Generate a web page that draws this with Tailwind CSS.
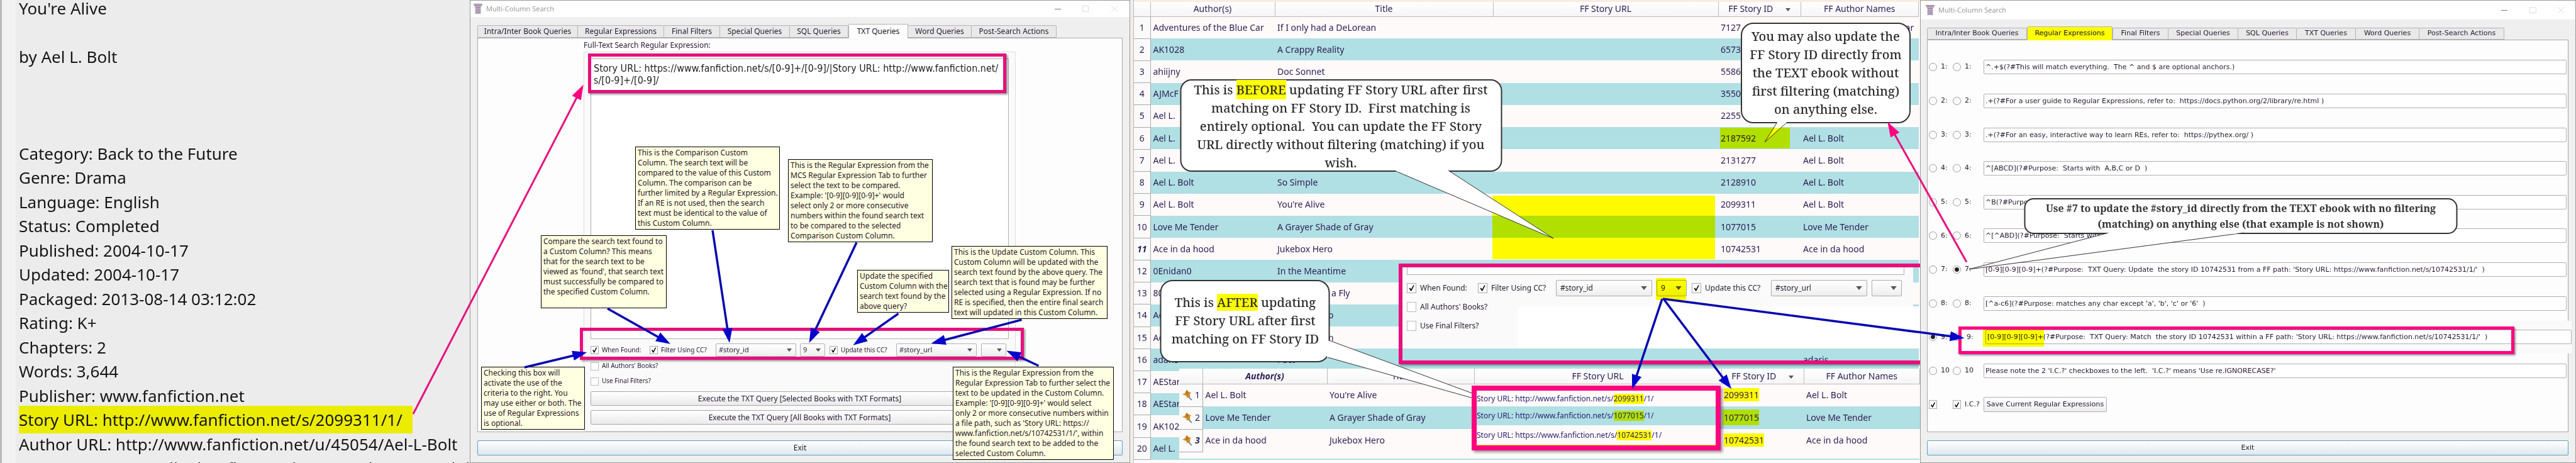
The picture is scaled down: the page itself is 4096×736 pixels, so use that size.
<!DOCTYPE html>
<html lang="en">
<head>
<meta charset="utf-8">
<title>Multi-Column Search – TXT Queries</title>
<script src="https://cdn.jsdelivr.net/npm/@tailwindcss/browser@4"></script>
</head>
<body class="bg-[#ececec] font-['Noto_Sans',sans-serif] text-xs text-[#24182f]">
<svg class="hidden">
  <symbol id="pillar" viewBox="0 0 14 16"><path d="M0 .5h14M1 3h12M2.500 5.500h9" stroke="#7c6480" stroke-width="1.400"/><path d="M2.500 6.500h9V16h-9z" fill="#b9a6c0"/><path d="M5 7v9M7.500 7v9M10 7v9" stroke="#9d88a6" stroke-width=".8"/></symbol>
  <symbol id="pin" viewBox="0 0 16 18"><path d="M9 11l6 6" stroke="#666" stroke-width="1.500"/><path d="M6.500 1l3.500 3 4 1-2 2.500.5 5-2.500-1-3 2.500-.5-4L0 8l4-2z" fill="#cf8c2b"/><path d="M6.500 1l3.500 3-3 6-1-3z" fill="#b8751f"/></symbol>
  <symbol id="down" viewBox="0 0 8 5"><path d="M0 0h8L4 5z" fill="#555"/></symbol>
  <symbol id="tick" viewBox="0 0 13 13"><path d="M3 6.500L4.500 6l1.300 2.200L8.800 2.500l1.400.2L6.300 10.500H5.200z" fill="#000"/></symbol>
</svg>
<main class="relative isolate grid h-screen min-h-[736px] grid-cols-[747fr_1050fr_1256fr_1043fr] overflow-hidden">

<!-- E-book text -->
<section class="flex overflow-hidden bg-[#ececec]">
  <div class="w-[3px] bg-[#b9b9b9]"></div>
  <div class="w-[22px] bg-[#f2f2f2]"></div>
  <div class="-mt-[6px] grid h-[770px] grid-rows-[repeat(20,1fr)] items-center pl-[5px] text-[26px] whitespace-nowrap text-[#161616]">
    <p>You're Alive</p><p></p>
    <p>by Ael L. Bolt</p><p></p><p></p><p></p>
    <p>Category: Back to the Future</p>
    <p>Genre: Drama</p>
    <p>Language: English</p>
    <p>Status: Completed</p>
    <p>Published: 2004-10-17</p>
    <p>Updated: 2004-10-17</p>
    <p>Packaged: 2013-08-14 03:12:02</p>
    <p>Rating: K+</p>
    <p>Chapters: 2</p>
    <p>Words: 3,644</p>
    <p>Publisher: www.fanfiction.net</p>
    <p><span class="bg-[#ecec00] py-1 pr-4">Story URL: http://www.fanfiction.net/s/2099311/1/</span></p>
    <p>Author URL: http://www.fanfiction.net/u/45054/Ael-L-Bolt</p>
    <p>Summary: Two small tales, flux. Back, Doc and Marty and d</p>
  </div>
</section>

<!-- TXT Queries dialog -->
<section class="flex flex-col border border-[#9a9a9a] bg-[#efefef]">
  <header class="flex h-[26px] items-center bg-white pl-[5px] text-[11px] text-[#999]">
    <svg class="mr-[6px] h-4 w-[14px]"><use href="#pillar"/></svg>
    <h1>Multi-Column Search</h1>
    <svg class="mr-[18px] ml-auto h-3 w-[102px]" fill="none"><path d="M1 6.500h10" stroke="#777"/><path d="M45.500 1.500h9v9h-9z" stroke="#ddd"/><path d="M91 1l10 10M101 1l-10 10" stroke="#ddd"/></svg>
  </header>
  <nav class="mt-[13px] flex h-5 items-stretch px-[11px] [&>button]:rounded-t-xs [&>button]:border [&>button]:border-[#b4b4b4] [&>button]:bg-[#e9e9e9] [&>button]:whitespace-nowrap">
    <button class="w-[160px]">Intra/Inter Book Queries</button>
    <button class="-ml-px w-[138px]">Regular Expressions</button>
    <button class="-ml-px w-[90px]">Final Filters</button>
    <button class="-ml-px w-[112px]">Special Queries</button>
    <button class="-ml-px w-[94px]">SQL Queries</button>
    <button class="relative z-10 -mt-[2px] -mb-px w-[95px] border-b-0! bg-[#fdfdfd]!">TXT Queries</button>
    <button class="-ml-px w-[102px]">Word Queries</button>
    <button class="-ml-px w-[136px]">Post-Search Actions</button>
  </nav>
  <div class="mx-[11px] flex flex-1 flex-col border border-[#aaa] bg-[#fdfdfd] pr-[169px] pl-[168px]">
    <label for="fts" class="h-[21px] leading-[21px]">Full-Text Search Regular Expression:</label>
    <div class="flex flex-1 flex-col rounded-xs border border-[#dedede] bg-[#fafafa] p-[10px]">
      <textarea id="fts" class="flex-1 resize-none border border-[#b0b0b0] bg-white px-[4px] py-[5px] font-['DejaVu_Sans_Condensed',sans-serif] text-base leading-[19px] whitespace-pre text-[#222]">Story URL: https://www.fanfiction.net/s/[0-9]+/[0-9]/|Story URL: http://www.fanfiction.net/
s/[0-9]+/[0-9]/</textarea>
      <div class="mt-[7px] flex h-[21px] items-center text-[10px] [&_input]:size-[13px] [&_input]:shrink-0 [&_input]:appearance-none [&_input]:border [&_input]:border-[#aaa] [&_input]:bg-white [&_label]:flex [&_label]:items-center [&_label]:gap-[5px] [&_label]:whitespace-nowrap [&_label>svg]:pointer-events-none [&_label>svg]:-ml-[18px] [&_label>svg]:size-[13px] [&_label>svg]:shrink-0 [&_select]:h-full [&_select]:w-full [&_select]:appearance-none [&_select]:rounded-xs [&_select]:border [&_select]:border-[#b0b0b0] [&_select]:bg-linear-to-b [&_select]:from-white [&_select]:to-[#eee] [&_select]:pl-1 [&_select]:text-[11px]">
        <label class="w-[94px]"><input type="checkbox" checked><svg><use href="#tick"/></svg>When Found:</label>
        <label class="w-[105px]"><input type="checkbox" checked><svg><use href="#tick"/></svg>Filter Using CC?</label>
        <div class="relative h-full w-[128px]"><select aria-label="Comparison column"><option>#story_id</option></select><svg class="absolute top-2 right-[7px] h-[5px] w-2"><use href="#down"/></svg></div>
        <div class="relative ml-[6px] h-full w-10"><select aria-label="Comparison expression"><option>9</option></select><svg class="absolute top-2 right-[7px] h-[5px] w-2"><use href="#down"/></svg></div>
        <label class="ml-[7px] w-[106px]"><input type="checkbox" checked><svg><use href="#tick"/></svg>Update this CC?</label>
        <div class="relative h-full w-[128px]"><select aria-label="Update column"><option>#story_url</option></select><svg class="absolute top-2 right-[7px] h-[5px] w-2"><use href="#down"/></svg></div>
        <div class="relative ml-[7px] h-full w-10"><select aria-label="Update expression"><option></option></select><svg class="absolute top-2 right-[7px] h-[5px] w-2"><use href="#down"/></svg></div>
      </div>
      <label class="mt-2 flex h-[14px] items-center gap-[5px] text-[10px]"><input type="checkbox" class="size-[13px] appearance-none border border-[#bbb] bg-white">All Authors' Books?</label>
      <label class="mt-[10px] flex h-[14px] items-center gap-[5px] text-[10px]"><input type="checkbox" class="size-[13px] appearance-none border border-[#bbb] bg-white">Use Final Filters?</label>
      <button class="mt-[9px] h-[23px] rounded-xs border border-[#a8a8a8] bg-linear-to-b from-white to-[#eaeaea]">Execute the TXT Query [Selected Books with TXT Formats]</button>
      <button class="mt-[7px] h-[23px] rounded-xs border border-[#a8a8a8] bg-linear-to-b from-white to-[#eaeaea]">Execute the TXT Query [All Books with TXT Formats]</button>
    </div>
  </div>
  <button class="mx-[11px] mt-[13px] mb-[11px] h-6 rounded-xs border border-[#5f9fbd] bg-linear-to-b from-white to-[#dde8ef]">Exit</button>
</section>

<!-- Library table -->
<section class="relative flex overflow-hidden bg-[#fffafa] text-sm text-[#2a1c50]">
  <div class="w-[6px] border-r border-[#b8b8b8] bg-[#f0eeec]"></div>
  <div class="flex-1 border-t-3 border-[#f8ece2] pr-[2px]">
    <table class="h-[728px] w-full table-fixed border-collapse whitespace-nowrap [&_td]:overflow-hidden [&_td]:p-0 [&_td]:pl-1 [&_td]:leading-5 [&_tbody_th]:border-r [&_tbody_th]:border-b [&_tbody_th]:border-[#aaa] [&_tbody_th]:bg-[#fbfafa] [&_tbody_th]:p-0 [&_tbody_th]:text-center [&_tbody_th]:font-normal [&_tbody_tr:nth-child(even)]:bg-[#b0dfe4] [&_thead_th]:border-r [&_thead_th]:border-b [&_thead_th]:border-[#bbb] [&_thead_th]:bg-linear-to-b [&_thead_th]:from-white [&_thead_th]:to-[#f6f4f6] [&_thead_th]:p-0 [&_thead_th]:leading-[22px] [&_thead_th]:font-normal">
      <colgroup><col class="w-[26px]"><col class="w-[198px]"><col class="w-[347px]"><col class="w-[358px]"><col class="w-[131px]"><col></colgroup>
      <thead><tr class="h-[23px]"><th></th><th>Author(s)</th><th>Title</th><th>FF Story URL</th><th>FF Story ID <svg class="ml-4 inline h-[5px] w-2"><use href="#down"/></svg></th><th>FF Author Names</th></tr></thead>
      <tbody>
        <tr><th>1</th><td>Adventures of the Blue Car</td><td>If I only had a DeLorean</td><td></td><td>7127</td><td>Adventures of the Blue Car</td></tr>
        <tr><th>2</th><td>AK1028</td><td>A Crappy Reality</td><td></td><td>6573</td><td></td></tr>
        <tr><th>3</th><td>ahiijny</td><td>Doc Sonnet</td><td></td><td>5586</td><td></td></tr>
        <tr><th>4</th><td>AJMcF</td><td></td><td></td><td>3550</td><td></td></tr>
        <tr><th>5</th><td>Ael L.</td><td></td><td></td><td>2255</td><td></td></tr>
        <tr><th>6</th><td>Ael L.</td><td></td><td></td><td>2187592</td><td>Ael L. Bolt</td></tr>
        <tr><th>7</th><td>Ael L.</td><td></td><td></td><td>2131277</td><td>Ael L. Bolt</td></tr>
        <tr><th>8</th><td>Ael L. Bolt</td><td>So Simple</td><td></td><td>2128910</td><td>Ael L. Bolt</td></tr>
        <tr><th>9</th><td>Ael L. Bolt</td><td>You're Alive</td><td></td><td>2099311</td><td>Ael L. Bolt</td></tr>
        <tr><th>10</th><td>Love Me Tender</td><td>A Grayer Shade of Gray</td><td></td><td>1077015</td><td>Love Me Tender</td></tr>
        <tr><th><b class="italic">11</b></th><td>Ace in da hood</td><td>Jukebox Hero</td><td></td><td>10742531</td><td>Ace in da hood</td></tr>
        <tr><th>12</th><td>0Enidan0</td><td>In the Meantime</td><td></td><td></td><td></td></tr>
        <tr><th>13</th><td>80</td><td><span class="pl-[86px]">a Fly</span></td><td></td><td></td><td></td></tr>
        <tr><th>14</th><td>Ac</td><td><span class="pl-[81px]">o</span></td><td></td><td></td><td></td></tr>
        <tr><th>15</th><td>Ac</td><td><span class="pl-[81px]">n</span></td><td></td><td></td><td></td></tr>
        <tr><th>16</th><td>adaris</td><td>Pact</td><td></td><td></td><td>adaris</td></tr>
        <tr><th>17</th><td>AEStar</td><td></td><td></td><td></td><td></td></tr>
        <tr><th>18</th><td>AEStar</td><td></td><td></td><td></td><td></td></tr>
        <tr><th>19</th><td>AK102</td><td></td><td></td><td></td><td></td></tr>
        <tr><th>20</th><td>Ael L.</td><td></td><td></td><td></td><td></td></tr>
      </tbody>
    </table>
  </div>

  <!-- Controls strip over the table -->
  <div class="absolute top-[425px] left-[433px] h-[129px] w-[812px] bg-[#fafafa] pl-[7px] text-[#24182f]">
    <div class="absolute top-[62px] -right-3 bottom-0 left-[184px] bg-white"></div>
    <div class="relative flex flex-col text-xs">
      <div class="mr-[14px] h-3 border border-t-0 border-[#b0b0b0] bg-white"></div>
      <div class="mt-2 flex h-[26px] items-center [&_input]:h-4 [&_input]:w-[15px] [&_input]:shrink-0 [&_input]:appearance-none [&_input]:border [&_input]:border-[#aaa] [&_input]:bg-white [&_label]:flex [&_label]:items-center [&_label]:gap-[6px] [&_label]:whitespace-nowrap [&_label>svg]:pointer-events-none [&_label>svg]:-ml-[21px] [&_label>svg]:h-4 [&_label>svg]:w-[15px] [&_label>svg]:shrink-0 [&_select]:h-full [&_select]:w-full [&_select]:appearance-none [&_select]:rounded-xs [&_select]:border [&_select]:border-[#aaa] [&_select]:bg-linear-to-b [&_select]:from-white [&_select]:to-[#eee] [&_select]:pl-[6px]">
        <label class="w-[113px]"><input type="checkbox" checked><svg><use href="#tick"/></svg>When Found:</label>
        <label class="w-[124px]"><input type="checkbox" checked><svg><use href="#tick"/></svg>Filter Using CC?</label>
        <div class="relative h-full w-[153px]"><select aria-label="Comparison column copy"><option>#story_id</option></select><svg class="absolute top-[10px] right-2 h-[6px] w-[10px]"><use href="#down"/></svg></div>
        <div class="relative ml-[7px] h-full w-12"><select aria-label="Comparison expression copy"><option>9</option></select><svg class="absolute top-[10px] right-2 h-[6px] w-[10px]"><use href="#down"/></svg></div>
        <label class="ml-2 w-[126px]"><input type="checkbox" checked><svg><use href="#tick"/></svg>Update this CC?</label>
        <div class="relative h-full w-[153px]"><select aria-label="Update column copy"><option>#story_url</option></select><svg class="absolute top-[10px] right-2 h-[6px] w-[10px]"><use href="#down"/></svg></div>
        <div class="relative ml-[7px] h-full w-12"><select aria-label="Update expression copy"><option></option></select><svg class="absolute top-[10px] right-2 h-[6px] w-[10px]"><use href="#down"/></svg></div>
      </div>
      <label class="mt-[9px] flex h-4 items-center gap-[6px]"><input type="checkbox" class="h-4 w-[15px] appearance-none border border-[#bbb] bg-white">All Authors' Books?</label>
      <label class="mt-[14px] flex h-4 items-center gap-[6px]"><input type="checkbox" class="h-4 w-[15px] appearance-none border border-[#bbb] bg-white">Use Final Filters?</label>
    </div>
  </div>
  <div class="absolute top-[419px] -right-2 left-[427px] h-[160px] border-6 border-[#e80f7c] shadow-[2px_2px_3px_#0006]"></div>

  <!-- Second table: the result -->
  <div class="absolute top-[586px] right-0 left-[78px] h-[144px] border-b border-[#b0dfe4] bg-[#fffafa]">
    <table class="w-full table-fixed border-collapse whitespace-nowrap [&_td]:p-0 [&_td]:pl-1 [&_td]:leading-5 [&_tbody_th]:border-r [&_tbody_th]:border-b [&_tbody_th]:border-[#aaa] [&_tbody_th]:bg-[#fbfafa] [&_tbody_th]:p-0 [&_tbody_th]:font-normal [&_tbody_tr]:h-9 [&_tbody_tr:nth-child(even)]:bg-[#b0dfe4] [&_thead_th]:border-r [&_thead_th]:border-b [&_thead_th]:border-[#bbb] [&_thead_th]:bg-linear-to-b [&_thead_th]:from-white [&_thead_th]:to-[#f6f4f6] [&_thead_th]:p-0 [&_thead_th]:font-normal">
      <colgroup><col class="w-[37px]"><col class="w-[198px]"><col class="w-[234px]"><col class="w-[393px]"><col class="w-[131px]"><col></colgroup>
      <thead><tr class="h-[24px]"><th></th><th><b class="italic">Author(s)</b></th><th>Title</th><th>FF Story URL</th><th>FF Story ID <svg class="ml-4 inline h-[5px] w-2"><use href="#down"/></svg></th><th>FF Author Names</th></tr></thead>
      <tbody>
        <tr><th><span class="flex items-center gap-[4px] pl-[5px]"><svg class="h-[18px] w-4"><use href="#pin"/></svg>1</span></th><td>Ael L. Bolt</td><td>You're Alive</td><td></td><td><mark class="bg-[#fffa00] py-px text-inherit">2099311</mark></td><td>Ael L. Bolt</td></tr>
        <tr><th><span class="flex items-center gap-[4px] pl-[5px]"><svg class="h-[18px] w-4"><use href="#pin"/></svg>2</span></th><td>Love Me Tender</td><td>A Grayer Shade of Gray</td><td></td><td><mark class="-ml-[2px] bg-[#b0df00] py-[3px] pl-[2px] text-inherit">1077015</mark></td><td>Love Me Tender</td></tr>
        <tr><th><span class="flex items-center gap-[4px] pl-[5px]"><svg class="h-[18px] w-4"><use href="#pin"/></svg><b class="italic">3</b></span></th><td>Ace in da hood</td><td>Jukebox Hero</td><td></td><td><mark class="bg-[#fffa00] py-px text-inherit">10742531</mark></td><td>Ace in da hood</td></tr>
      </tbody>
    </table>
  </div>
</section>

<!-- Regular Expressions dialog -->
<section class="relative flex flex-col border border-[#9a9a9a] bg-[#efefef] font-['DejaVu_Sans',sans-serif] text-[11px]">
  <header class="flex h-[30px] items-center bg-white pl-2 text-[11px] text-[#999]">
    <svg class="mr-[6px] h-4 w-[14px]"><use href="#pillar"/></svg>
    <h1 class="font-['Noto_Sans',sans-serif]">Multi-Column Search</h1>
    <svg class="mr-[17px] ml-auto h-3 w-[102px]" fill="none"><path d="M1 6.500h10" stroke="#777"/><path d="M46.500 1.500h10v9h-10z" stroke="#ddd"/><path d="M91 1l10 10M101 1l-10 10" stroke="#ddd"/></svg>
  </header>
  <nav class="mt-[13px] flex h-[19px] items-stretch px-[10px] [&>button]:rounded-t-xs [&>button]:border [&>button]:border-[#b4b4b4] [&>button]:bg-[#e9e9e9] [&>button]:whitespace-nowrap">
    <button class="w-[159px]">Intra/Inter Book Queries</button>
    <button class="relative z-10 -mt-[2px] -mb-px w-[136px] border-b-0! bg-[#ffff00]!">Regular Expressions</button>
    <button class="w-[89px]">Final Filters</button>
    <button class="-ml-px w-[112px]">Special Queries</button>
    <button class="-ml-px w-[94px]">SQL Queries</button>
    <button class="-ml-px w-[95px]">TXT Queries</button>
    <button class="-ml-px w-[102px]">Word Queries</button>
    <button class="-ml-px w-[136px]">Post-Search Actions</button>
  </nav>
  <div class="mr-[11px] ml-[10px] grid flex-1 grid-rows-11 border border-[#aaa] bg-[#fdfdfd] py-4 pr-[2px] pl-[2px] [&_input[type=checkbox]]:h-[14px] [&_input[type=checkbox]]:w-[13px] [&_input[type=checkbox]]:appearance-none [&_input[type=checkbox]]:border [&_input[type=checkbox]]:border-[#aaa] [&_input[type=checkbox]]:bg-white [&_input[type=radio]]:size-[13px] [&_input[type=radio]]:appearance-none [&_input[type=radio]]:rounded-full [&_input[type=radio]]:border [&_input[type=radio]]:border-[#999] [&_input[type=radio]]:bg-white [&_input[type=text]]:h-[23px] [&_input[type=text]]:min-w-0 [&_input[type=text]]:flex-1 [&_input[type=text]]:rounded-xs [&_input[type=text]]:border [&_input[type=text]]:border-[#b0b0b0] [&_input[type=text]]:bg-white [&_input[type=text]]:pl-[2px] [&_label]:flex [&_label]:items-center [&_label]:gap-[6px] [&_svg]:pointer-events-none [&_svg]:-ml-[19px] [&_svg]:size-[13px] [&>div]:flex [&>div]:items-center">
    <div><label class="w-[38px]"><input type="radio" name="a">1:</label><label class="w-[49px]"><input type="radio" name="b">1:</label><input type="text" aria-label="Expression 1" value="^.+$(?#This will match everything.  The ^ and $ are optional anchors.)"></div>
    <div><label class="w-[38px]"><input type="radio" name="a">2:</label><label class="w-[49px]"><input type="radio" name="b">2:</label><input type="text" aria-label="Expression 2" value=".+(?#For a user guide to Regular Expressions, refer to:  https://docs.python.org/2/library/re.html )"></div>
    <div><label class="w-[38px]"><input type="radio" name="a">3:</label><label class="w-[49px]"><input type="radio" name="b">3:</label><input type="text" aria-label="Expression 3" value=".+(?#For an easy, interactive way to learn REs, refer to:  https://pythex.org/ )"></div>
    <div><label class="w-[38px]"><input type="radio" name="a">4:</label><label class="w-[49px]"><input type="radio" name="b">4:</label><input type="text" aria-label="Expression 4" value="^[ABCD](?#Purpose:  Starts with  A,B,C or D  )"></div>
    <div><label class="w-[38px]"><input type="radio" name="a">5:</label><label class="w-[49px]"><input type="radio" name="b">5:</label><input type="text" aria-label="Expression 5" value="^B(?#Purpose:"></div>
    <div><label class="w-[38px]"><input type="radio" name="a">6:</label><label class="w-[49px]"><input type="radio" name="b">6:</label><input type="text" aria-label="Expression 6" value="^[^ABD](?#Purpose:  Starts with"></div>
    <div><label class="w-[38px]"><input type="radio" name="a">7:</label><label class="w-[49px]"><input type="radio" name="b" checked class="bg-[radial-gradient(circle,#222_0_3px,white_4px)]!">7:</label><input type="text" aria-label="Expression 7" value="[0-9][0-9][0-9]+(?#Purpose:  TXT Query: Update  the story ID 10742531 from a FF path: 'Story URL: https://www.fanfiction.net/s/10742531/1/'  )"></div>
    <div><label class="w-[38px]"><input type="radio" name="a">8:</label><label class="w-[49px]"><input type="radio" name="b">8:</label><input type="text" aria-label="Expression 8" value="[^a-c6](?#Purpose: matches any char except 'a', 'b', 'c' or '6'  )"></div>
    <div><label class="w-[38px]"><input type="radio" name="a" checked class="bg-[radial-gradient(circle,#222_0_3px,white_4px)]!">9:</label><label class="w-[52px]"><input type="radio" name="b"><span class="pl-[3px]">9:</span></label><div class="-mr-2 flex h-[52px] flex-1 items-center bg-[#fafafa]"><input type="text" aria-label="Expression 9" value="[0-9][0-9][0-9]+(?#Purpose:  TXT Query: Match  the story ID 10742531 within a FF path: 'Story URL: https://www.fanfiction.net/s/10742531/1/'  )"></div></div>
    <div><label class="w-[38px]"><input type="radio" name="a">10</label><label class="w-[49px]"><input type="radio" name="b">10</label><input type="text" aria-label="Expression 10" value="Please note the 2 'I.C.?' checkboxes to the left.  'I.C.?' means 'Use re.IGNORECASE?'"></div>
    <div><label class="w-[38px]"><input type="checkbox" checked aria-label="Ignore case, first column"><svg><use href="#tick"/></svg></label><label class="w-[49px]"><input type="checkbox" checked><svg><use href="#tick"/></svg>I.C.?</label><button class="h-6 w-[196px] rounded-xs border border-[#b0b0b0] bg-linear-to-b from-white to-[#eee] whitespace-nowrap">Save Current Regular Expressions</button></div>
  </div>
  <button class="mt-[13px] mr-[11px] mb-[11px] ml-[10px] h-6 rounded-xs border border-[#5f9fbd] bg-linear-to-b from-white to-[#dde8ef]">Exit</button>
</section>

<!-- Annotations -->
<div class="absolute top-[311px] left-[2373px] h-[101px] w-[354px] bg-[#ffff00] mix-blend-multiply"></div>
<svg class="pointer-events-none absolute inset-0 h-[736px] w-[4096px]" fill="white" stroke="#333">
  <rect x="1877.500" y="127" width="510" height="145" rx="17" stroke-width="2"/>
  <path d="M2217 271L2470 379L2303 271" stroke-width="1"/>
  <path d="M2219 270h83v3h-80z" stroke="none"/>
  <rect x="2769" y="37" width="268" height="158" rx="19" stroke-width="2"/>
  <path d="M2826 194L2806 226L2842 194" stroke-width="1"/>
  <path d="M2827 192h13v3l-2 2h-13z" stroke="none"/>
  <rect x="1845.500" y="446" width="268" height="129" rx="19" stroke-width="2"/>
  <path d="M2113 541L2346 627L2346 634L2111 568" stroke-width="1"/>
  <path d="M2110 542h5v26h-5z" stroke="none"/>
  <rect x="3219.500" y="316" width="687" height="55" rx="14" stroke-width="2"/>
  <path d="M3353 370L3131 428L3568 370" stroke-width="1"/>
  <path d="M3356 368h200v3.500H3350z" stroke="none"/>
</svg>
<div class="absolute top-[203px] left-[2735px] h-[33px] w-[111px] bg-[#ffff00] mix-blend-multiply"></div>
<div class="absolute top-[442px] left-[2633px] h-[35px] w-12 bg-[#ffff00] mix-blend-multiply"></div>

<p class="absolute top-[128px] left-[1878px] w-[508px] text-center font-['Noto_Serif','Liberation_Serif',serif] text-xl leading-[29px] font-medium whitespace-nowrap text-[#2b2b2b]">This is <mark class="bg-[#ffff00] py-[2px] text-inherit">BEFORE</mark> updating FF Story URL after first<br>matching on FF Story ID.&nbsp; First matching is<br>entirely optional.&nbsp; You can update the FF Story<br>URL directly without filtering (matching) if you<br>wish.</p>
<p class="absolute top-[43px] left-[2769px] w-[268px] text-center font-['Noto_Serif','Liberation_Serif',serif] text-xl leading-[29px] font-medium whitespace-nowrap text-[#2b2b2b]">You may also update the<br>FF Story ID directly from<br>the TEXT ebook without<br>first filtering (matching)<br>on anything else.</p>
<p class="absolute top-[466px] left-[1846px] w-[268px] text-center font-['Noto_Serif','Liberation_Serif',serif] text-xl leading-[29px] font-medium whitespace-nowrap text-[#2b2b2b]">This is <mark class="bg-[#ffff00] text-inherit">AFTER</mark> updating<br>FF Story URL after first<br>matching on FF Story ID</p>
<p class="absolute top-[319px] left-[3220px] w-[686px] text-center font-['Noto_Serif','Liberation_Serif',serif] text-base leading-[25px] font-bold whitespace-nowrap text-[#333]">Use #7 to update the #story_id directly from the TEXT ebook with no filtering<br>(matching) on anything else (that example is not shown)</p>

<div class="absolute top-[613px] left-[2340px] grid h-[103px] w-[396px] grid-rows-[25px_30px_1fr] border-8 border-[#ff0080] bg-[#fffafa] whitespace-nowrap text-[#241c6e] shadow-[3px_3px_4px_#0006] [&>p]:flex [&>p]:items-center">
  <p>Story URL: http://www.fanfiction.net/s/<mark class="bg-[#fffa00] text-inherit">2099311</mark>/1/</p>
  <p class="bg-[#b0dfe4]">Story URL: http://www.fanfiction.net/s/<mark class="bg-[#b0df00] text-inherit">1077015</mark>/1/</p>
  <p class="border-b border-[#f4e800]">Story URL: https://www.fanfiction.net/s/<mark class="bg-[#fffa00] text-inherit">10742531</mark>/1/</p>
</div>

<div class="absolute top-[85px] left-[935px] h-[63px] w-[665px] border-5 border-[#e80f7c] shadow-[2px_2px_3px_#0007]"></div>
<div class="absolute top-[521px] left-[922px] h-[51px] w-[706px] border-5 border-[#e80f7c] shadow-[2px_2px_3px_#0006]"></div>
<div class="absolute top-[524px] left-[3153px] h-[27px] w-[97px] bg-[#ffff00] mix-blend-multiply"></div>
<div class="absolute top-[519px] left-[3114px] h-[44px] w-[884px] border-5 border-[#ff0080] shadow-[2px_2px_3px_#0006]"></div>

<div class="[&>p]:absolute [&>p]:border [&>p]:border-black [&>p]:bg-[#ffffe1] [&>p]:px-[3px] [&>p]:leading-4 [&>p]:whitespace-nowrap [&>p]:text-[#2a1525]">
  <p class="top-[233px] left-[1010px] w-[230px] py-px">This is the Comparison Custom<br>Column. The search text will be<br>compared to the value of this Custom<br>Column. The comparison can be<br>further limited by a Regular Expression.<br>If an RE is not used, then the search<br>text must be identical to the value of<br>this Custom Column.</p>
  <p class="top-[253px] left-[1253px] w-[230px] py-px">This is the Regular Expression from the<br>MCS Regular Expression Tab to further<br>select the text to be compared.<br>Example: '[0-9][0-9][0-9]+' would<br>select only 2 or more consecutive<br>numbers within the found search text<br>to be compared to the selected<br>Comparison Custom Column.</p>
  <p class="top-[374px] left-[860px] w-[200px] py-px">Compare the search text found to<br>a Custom Column? This means<br>that for the search text to be<br>viewed as 'found', that search text<br>must successfully be compared to<br>the specified Custom Column.<br>&nbsp;</p>
  <p class="top-[583px] left-[765px] w-[165px] py-px">Checking this box will<br>activate the use of the<br>criteria to the right. You<br>may use either or both. The<br>use of Regular Expressions<br>is optional.</p>
  <p class="top-[429px] left-[1363px] w-[146px] py-px">Update the specified<br>Custom Column with the<br>search text found by the<br>above query?</p>
  <p class="top-[391px] left-[1513px] w-[248px] py-px">This is the Update Custom Column. This<br>Custom Column will be updated with the<br>search text found by the above query. The<br>search text that is found may be further<br>selected using a Regular Expression. If no<br>RE is specified, then the entire final search<br>text will updated in this Custom Column.</p>
  <p class="top-[583px] left-[1515px] w-[256px] py-px">This is the Regular Expression from the<br>Regular Expression Tab to further select the<br>text to be updated in the Custom Column.<br>Example: '[0-9][0-9][0-9]+' would select<br>only 2 or more consecutive numbers within<br>a file path, such as 'Story URL: https://<br>www.fanfiction.net/s/10742531/1/', within<br>the found search text to be added to the<br>selected Custom Column.</p>
</div>

<svg class="pointer-events-none absolute inset-0 h-[736px] w-[4096px]" stroke-width="3.500" stroke="#0505b0">
  <defs>
    <marker id="ab" markerUnits="userSpaceOnUse" markerWidth="23" markerHeight="16" refX="18" refY="8" orient="auto"><path d="M0 0L23 8L0 16z" fill="#0000cc" stroke="none"/></marker>
    <marker id="ap" markerUnits="userSpaceOnUse" markerWidth="24" markerHeight="16" refX="19" refY="8" orient="auto"><path d="M0 0L24 8L0 16z" fill="#ff0080" stroke="none"/></marker>
  </defs>
  <path marker-end="url(#ab)" d="M1133 366L1159.300 540"/>
  <path marker-end="url(#ab)" d="M966 490.500L1061.600 544.200"/>
  <path marker-end="url(#ab)" d="M834 584L928.400 561.200"/>
  <path marker-end="url(#ab)" d="M1362 385.500L1288.800 540.500"/>
  <path marker-end="url(#ab)" d="M1428.500 498.500L1360.600 546"/>
  <path marker-end="url(#ab)" d="M1624.500 508.300L1485.500 544.700"/>
  <path marker-end="url(#ab)" d="M1651.500 581.500L1604.900 559.600"/>
  <path marker-end="url(#ab)" d="M2643 475L2596.800 613.600"/>
  <path marker-end="url(#ab)" d="M2645 475L2750 614.300"/>
  <path marker-end="url(#ab)" d="M2644 475L3118.600 536.800"/>
  <g stroke="#e6117e" stroke-width="3">
    <path marker-end="url(#ap)" d="M657 658L925.400 139"/>
    <path marker-end="url(#ap)" d="M3127 416.500L3003.800 198"/>
  </g>
</svg>
</main>
</body>
</html>
